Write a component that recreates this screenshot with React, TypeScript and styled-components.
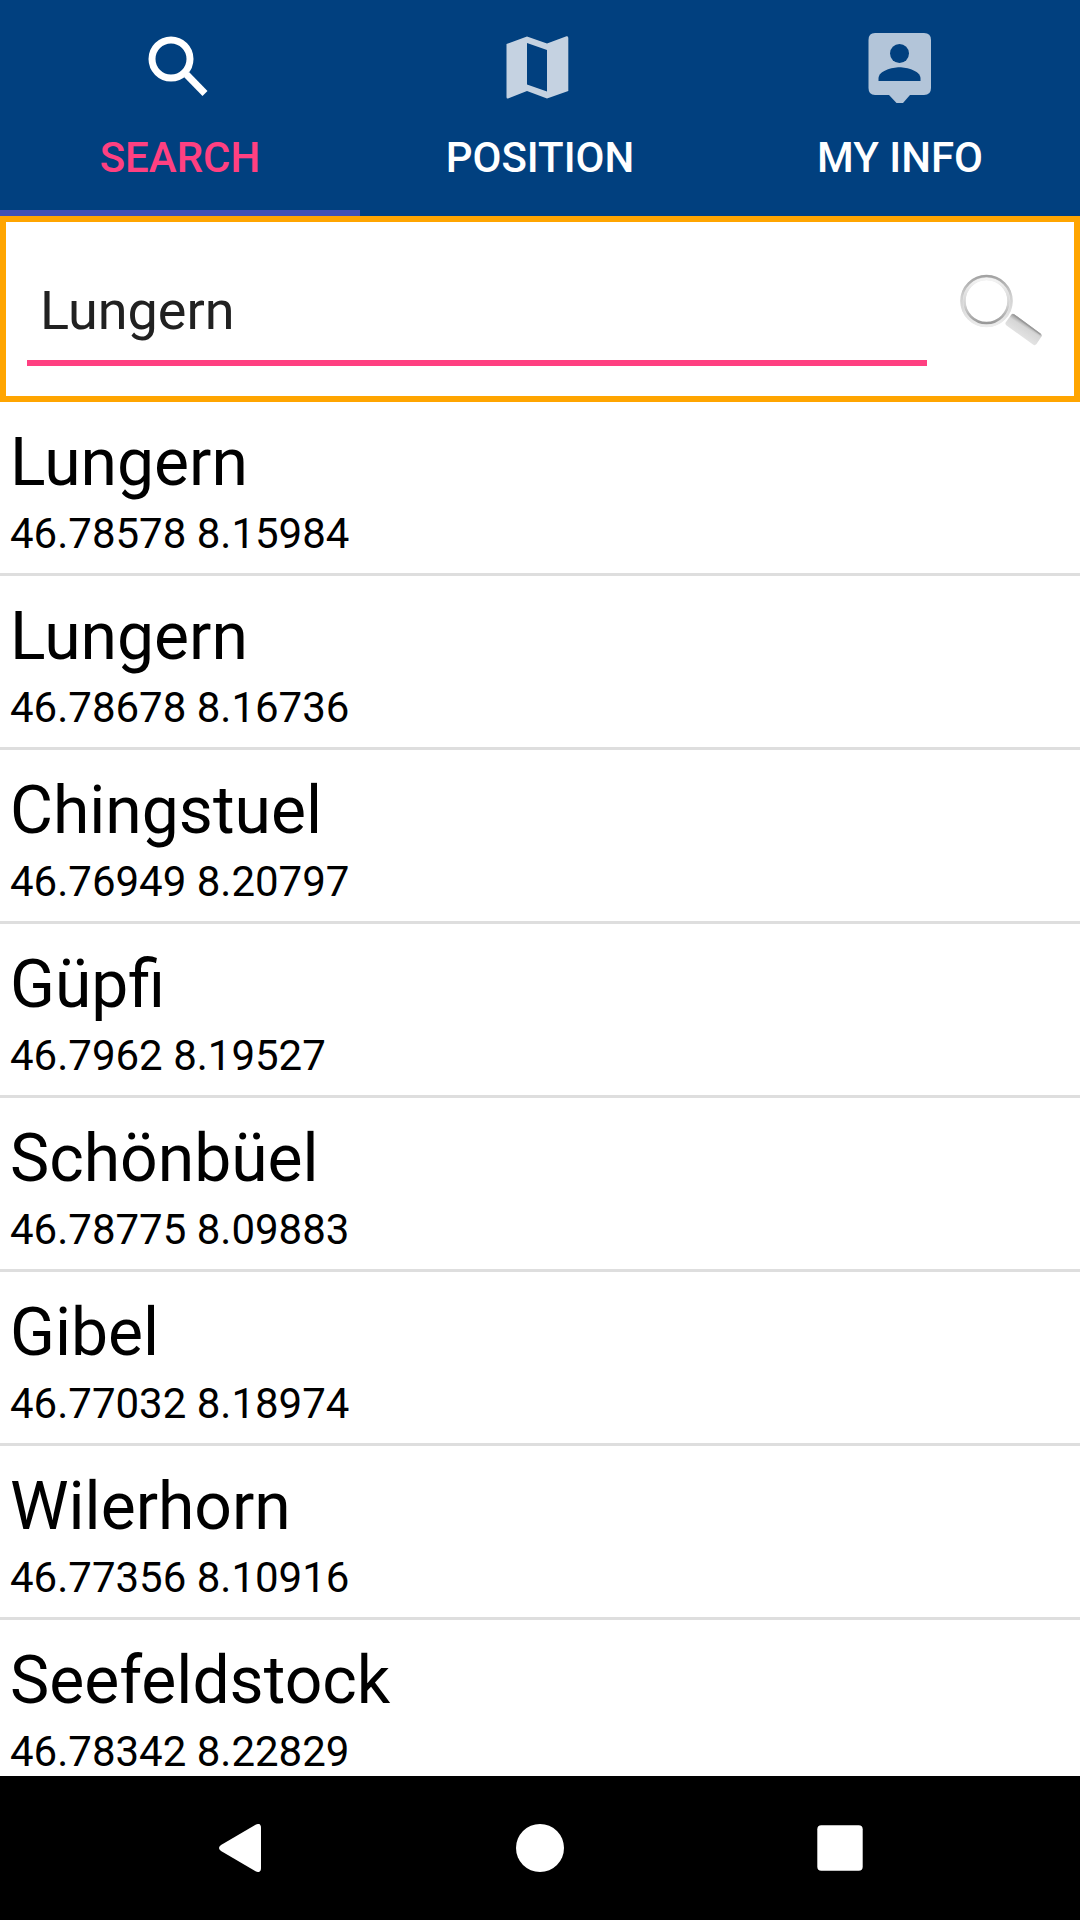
import React, { useState } from 'react';
import styled, { createGlobalStyle } from 'styled-components';

const GlobalStyle = createGlobalStyle`
  * {
    box-sizing: border-box;
  }

  body {
    margin: 0;
    background: #ffffff;
    font-family: Roboto, 'Noto Sans', sans-serif;
  }

  button,
  input {
    font-family: inherit;
    border: 0;
    border-radius: 0;
    background: none;
    outline: none;
  }

  button {
    padding: 0;
    cursor: pointer;
  }

  svg {
    display: block;
  }
`;

const Screen = styled.div`
  display: flex;
  flex-direction: column;
  height: 100vh;
  overflow: hidden;
`;

const TabBar = styled.div`
  display: flex;
  flex: none;
  background: #01407f;
`;

const Tab = styled.button<{ $active: boolean }>`
  display: flex;
  flex: 1;
  flex-direction: column;
  align-items: center;
  gap: 25px;
  padding: 26px 0 28px;
  border-bottom: 6px solid ${({ $active }) => ($active ? '#3f51b5' : 'transparent')};
  color: ${({ $active }) => ($active ? '#ff4081' : '#ffffff')};
  font-size: 42px;
  font-weight: 500;
  line-height: 49px;
`;

const SearchForm = styled.form`
  display: flex;
  flex: none;
  align-items: center;
  gap: 24px;
  padding: 30px 27px 30px 21px;
  border: 6px solid #ffa500;
`;

const SearchInput = styled.input`
  flex: 1;
  min-width: 0;
  height: 114px;
  padding: 8px 13px 0;
  border-bottom: 6px solid #ff4081;
  color: #212121;
  font-size: 54px;
`;

const SearchButton = styled.button`
  flex: none;
`;

const Results = styled.ul`
  flex: 1;
  min-height: 0;
  margin: 0;
  padding: 0;
  overflow-y: auto;
  list-style: none;
  scrollbar-width: none;
`;

const Result = styled.li`
  display: flex;
  flex-direction: column;
  gap: 2px;
  padding: 16px 10px 15px;
  border-bottom: 3px solid #dedede;
  color: #000000;
`;

const PlaceName = styled.div`
  font-size: 66px;
  line-height: 89px;
`;

const Coordinates = styled.div`
  font-size: 42px;
  line-height: 49px;
`;

const SystemBar = styled.nav`
  display: flex;
  flex: none;
  justify-content: center;
  background: #000000;
`;

const SystemButton = styled.button`
  display: flex;
  flex: 0 1 300px;
  align-items: center;
  justify-content: center;
  height: 144px;
`;

const SearchTabIcon = () => (
  <svg width="82" height="82" viewBox="0 0 82 82" fill="none" stroke="#ffffff" aria-hidden="true">
    <circle cx="32" cy="33" r="19" strokeWidth="7" />
    <path d="M47.5 48.5 66 67.5" strokeWidth="7" />
    <path d="M45 46 51 52" strokeWidth="4" />
  </svg>
);

const MapTabIcon = () => (
  <svg width="82" height="82" viewBox="0 0 82 82" fill="#c5d2e1" aria-hidden="true">
    <path
      fillRule="evenodd"
      d="M7.5 18 28 10.5 48 17.5 67.5 10.3Q69.3 9.8 69.3 12V65L48 72.5 28 65 9 72.5Q7.5 73 7.5 71ZM28 17V58.5L48 65.5V24Z"
    />
  </svg>
);

const InfoTabIcon = () => (
  <svg width="82" height="82" viewBox="0 0 82 82" aria-hidden="true">
    <path
      fill="#b3c5d9"
      d="M16 7H65Q72 7 72 14V62Q72 69 65 69H51L44 77H37.5L30 69H16Q9.5 69 9.5 62V14Q9.5 7 16 7Z"
    />
    <circle cx="40.5" cy="27.5" r="9.5" fill="#01407f" />
    <path fill="#01407f" d="M19.5 55V52C20 45 33 41.3 40.5 41.3S61 45 61.5 52V55Z" />
  </svg>
);

const MagnifierIcon = () => (
  <svg width="96" height="96" viewBox="0 0 96 96" aria-hidden="true">
    <defs>
      <linearGradient id="rim" x1="0" y1="0" x2="0" y2="1">
        <stop offset="0" stopColor="#a2a2a2" />
        <stop offset="0.4" stopColor="#cfcfcf" />
        <stop offset="1" stopColor="#ececec" />
      </linearGradient>
      <linearGradient id="bevel" x1="0" y1="0" x2="0" y2="1">
        <stop offset="0" stopColor="#f4f4f4" />
        <stop offset="0.6" stopColor="#d2d2d2" />
        <stop offset="1" stopColor="#989898" />
      </linearGradient>
      <linearGradient id="grip" gradientUnits="userSpaceOnUse" x1="76" y1="63" x2="69" y2="74">
        <stop offset="0" stopColor="#a6a6a6" />
        <stop offset="0.3" stopColor="#d6d6d6" />
        <stop offset="1" stopColor="#e2e2e2" />
      </linearGradient>
    </defs>
    <circle cx="35.5" cy="40" r="23.5" fill="none" stroke="#e6e6e6" strokeWidth="5" />
    <circle cx="35.5" cy="40" r="25" fill="none" stroke="url(#rim)" strokeWidth="2.5" />
    <circle cx="35.5" cy="40" r="22" fill="none" stroke="url(#bevel)" strokeWidth="2.5" />
    <path
      d="M60 54Q61.500 52 63.500 53.500L89.500 72.500Q91.500 74 90.500 75.500L85.500 83Q84 85 82 83.500L55.500 64.500Q53.500 63 55 61Z"
      fill="url(#grip)"
    />
    <path d="M63 54 89 73" stroke="#9a9a9a" strokeWidth="1.5" strokeLinecap="round" />
  </svg>
);

const BackIcon = () => (
  <svg width="48" height="48" viewBox="0 0 48 48" fill="#ffffff" aria-hidden="true">
    <path d="M40 .5Q45 -1.5 45 4V44Q45 49.5 40 47.5L5 27Q1 24 5 21Z" />
  </svg>
);

const HomeIcon = () => (
  <svg width="48" height="48" viewBox="0 0 48 48" fill="#ffffff" aria-hidden="true">
    <circle cx="24" cy="24" r="24" />
  </svg>
);

const RecentsIcon = () => (
  <svg width="48" height="48" viewBox="0 0 48 48" fill="#ffffff" aria-hidden="true">
    <rect x="1.3" y="1.3" width="45.4" height="45.4" rx="4" />
  </svg>
);

const tabs = [
  { label: 'SEARCH', Icon: SearchTabIcon },
  { label: 'POSITION', Icon: MapTabIcon },
  { label: 'MY INFO', Icon: InfoTabIcon },
];

const places = [
  { name: 'Lungern', lat: 46.78578, lon: 8.15984 },
  { name: 'Lungern', lat: 46.78678, lon: 8.16736 },
  { name: 'Chingstuel', lat: 46.76949, lon: 8.20797 },
  { name: 'Güpfi', lat: 46.7962, lon: 8.19527 },
  { name: 'Schönbüel', lat: 46.78775, lon: 8.09883 },
  { name: 'Gibel', lat: 46.77032, lon: 8.18974 },
  { name: 'Wilerhorn', lat: 46.77356, lon: 8.10916 },
  { name: 'Seefeldstock', lat: 46.78342, lon: 8.22829 },
];

export default function App() {
  const [active, setActive] = useState('SEARCH');
  const [query, setQuery] = useState('Lungern');

  return (
    <Screen>
      <GlobalStyle />
      <TabBar role="tablist">
        {tabs.map(({ label, Icon }) => (
          <Tab
            key={label}
            type="button"
            role="tab"
            aria-selected={active === label}
            $active={active === label}
            onClick={() => setActive(label)}
          >
            <Icon />
            {label}
          </Tab>
        ))}
      </TabBar>
      <SearchForm role="search" onSubmit={(event) => event.preventDefault()}>
        <SearchInput
          type="text"
          aria-label="Place name"
          value={query}
          onChange={(event) => setQuery(event.target.value)}
        />
        <SearchButton type="submit" aria-label="Search">
          <MagnifierIcon />
        </SearchButton>
      </SearchForm>
      <Results>
        {places.map(({ name, lat, lon }) => (
          <Result key={lat}>
            <PlaceName>{name}</PlaceName>
            <Coordinates>
              {lat} {lon}
            </Coordinates>
          </Result>
        ))}
      </Results>
      <SystemBar aria-label="System">
        <SystemButton type="button" aria-label="Back">
          <BackIcon />
        </SystemButton>
        <SystemButton type="button" aria-label="Home">
          <HomeIcon />
        </SystemButton>
        <SystemButton type="button" aria-label="Recent apps">
          <RecentsIcon />
        </SystemButton>
      </SystemBar>
    </Screen>
  );
}
